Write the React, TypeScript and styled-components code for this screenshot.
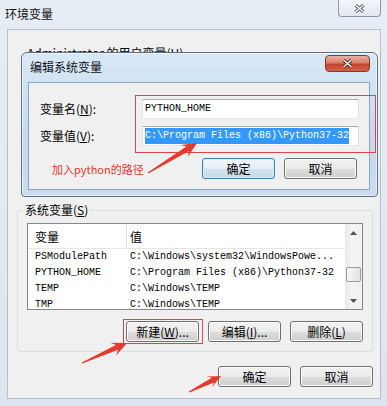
import React from 'react'
import styled, { createGlobalStyle } from 'styled-components'

const UI = `"Noto Sans CJK SC", "Liberation Sans", sans-serif`
const MONO = `"Liberation Mono", "DejaVu Sans Mono", monospace`

const GlobalStyle = createGlobalStyle`
  html, body { margin: 0; padding: 0; background: #fff; }
  body { font-family: ${UI}; font-size: 12px; color: #000; }
`

type EnvVar = { name: string; value: string }

const sysVars: EnvVar[] = [
    { name: 'PSModulePath', value: 'C:\\Windows\\system32\\WindowsPowe...' },
    { name: 'PYTHON_HOME', value: 'C:\\Program Files (x86)\\Python37-32' },
    { name: 'TEMP', value: 'C:\\Windows\\TEMP' },
    { name: 'TMP', value: 'C:\\Windows\\TEMP' },
]

// tapered red annotation arrow, tail -> tip
const arrowPoints = (x1: number, y1: number, x2: number, y2: number, hl = 15, hw = 7) => {
    const len = Math.hypot(x2 - x1, y2 - y1)
    const ux = (x2 - x1) / len, uy = (y2 - y1) / len
    const nx = -uy, ny = ux
    const p = (x: number, y: number) => `${x.toFixed(1)},${y.toFixed(1)}`
    const bx = x2 - ux * hl, by = y2 - uy * hl
    const jx = x2 - ux * (hl - 4), jy = y2 - uy * (hl - 4)
    return [
        p(x1 + nx * 0.6, y1 + ny * 0.6),
        p(jx + nx * 2.6, jy + ny * 2.6),
        p(bx + nx * hw, by + ny * hw),
        p(x2, y2),
        p(bx - nx * hw, by - ny * hw),
        p(jx - nx * 2.6, jy - ny * 2.6),
        p(x1 - nx * 0.6, y1 - ny * 0.6),
    ].join(' ')
}

const CloseGlyph = ({ light }: { light?: boolean }) => (
    <svg width="11" height="9" viewBox="0 0 11 9">
        <path d="M1.5 1 L9.5 8 M9.5 1 L1.5 8" stroke={light ? '#5a2018' : '#4e5966'} strokeWidth="3.2" />
        <path d="M1.5 1 L9.5 8 M9.5 1 L1.5 8" stroke="#fff" strokeWidth="1.4" />
    </svg>
)

const Arrow = ({ dir }: { dir: 'up' | 'down' }) => (
    <svg width="7" height="4" viewBox="0 0 7 4">
        <polygon points={dir === 'up' ? '0,4 3.5,0 7,4' : '0,0 3.5,4 7,0'} fill="#505050" />
    </svg>
)

const VarList = ({ rows, height }: { rows: EnvVar[]; height: number }) => (
    <ListBox style={{ height }}>
        <ListMain>
            <ListHeader>
                <HeadCell $first>变量</HeadCell>
                <HeadCell>值</HeadCell>
            </ListHeader>
            {rows.map(r => (
                <ListRow key={r.name}>
                    <Cell $first>{r.name}</Cell>
                    <Cell>{r.value}</Cell>
                </ListRow>
            ))}
        </ListMain>
        <ScrollBar>
            <ScrollArrow><Arrow dir="up" /></ScrollArrow>
            <ScrollTrack><Thumb /></ScrollTrack>
            <ScrollArrow><Arrow dir="down" /></ScrollArrow>
        </ScrollBar>
    </ListBox>
)

export const App = () => {
    return (
        <Window>
            <GlobalStyle />
            <TitleBar>
                <Title>环境变量</Title>
                <WinClose><CloseGlyph /></WinClose>
            </TitleBar>

            <Client>
                {/* user variables: covered by the edit dialog */}
                <UserSection>
                    <SectionLabel>Administrator 的用户变量(<u>U</u>)</SectionLabel>
                    <HiddenList />
                </UserSection>

                <Group>
                    <Legend>系统变量(<u>S</u>)</Legend>
                    <VarList rows={sysVars} height={87} />
                    <ButtonRow $top={11}>
                        <Button>新建(<u>W</u>)...</Button>
                        <Button>编辑(<u>I</u>)...</Button>
                        <Button>删除(<u>L</u>)</Button>
                    </ButtonRow>
                </Group>

                <ButtonRow $top={14}>
                    <Button>确定</Button>
                    <Button>取消</Button>
                </ButtonRow>
            </Client>

            <EditDialog>
                <DialogTitleBar>
                    <Title>编辑系统变量</Title>
                    <RedClose><CloseGlyph light /></RedClose>
                </DialogTitleBar>
                <DialogClient>
                    <FormGrid>
                        <FieldLabel>变量名(<u>N</u>):</FieldLabel>
                        <TextInput>PYTHON_HOME</TextInput>
                        <FieldLabel>变量值(<u>V</u>):</FieldLabel>
                        <TextInput><Selected>C:\Program Files (x86)\Python37-32</Selected></TextInput>
                    </FormGrid>
                    <DialogButtons>
                        <Button $default>确定</Button>
                        <Button>取消</Button>
                    </DialogButtons>
                </DialogClient>
            </EditDialog>

            <MarkBox style={{ left: 135, top: 95, width: 241, height: 58 }} />
            <MarkBox style={{ left: 123, top: 319, width: 80, height: 25 }} />
            <Note>加入python的路径</Note>
            <Marks width="387" height="406" viewBox="0 0 387 406">
                <polygon points={arrowPoints(148, 173, 197, 143)} />
                <polygon points={arrowPoints(82, 363, 127, 343)} />
                <polygon points={arrowPoints(189, 392, 221, 376, 13, 6)} />
            </Marks>
        </Window>
    )
}

const Window = styled.div`
    position: relative;
    width: 387px;
    height: 406px;
    display: flex;
    flex-direction: column;
    background: linear-gradient(#e6edf5, #dce5ef);
    overflow: hidden;
`

const TitleBar = styled.div`
    height: 29px;
    display: flex;
    justify-content: space-between;
    align-items: flex-start;
    padding: 0 6px 0 5px;
`

const Title = styled.div`
    margin-top: 6px;
    font-size: 12px;
    line-height: 16px;
    color: #111;
`

const WinClose = styled.div`
    width: 43px;
    height: 17px;
    box-sizing: border-box;
    border: 1px solid #8b98a8;
    border-top: none;
    border-radius: 0 0 4px 4px;
    background: linear-gradient(#f4f7fa, #e1e7ee);
    display: flex;
    align-items: center;
    justify-content: center;
`

const Client = styled.div`
    flex: 1;
    margin: 0 6px 7px 7px;
    border: 1px solid #b3bfcc;
    background: #f0f0f0;
    padding: 0 7px 0 9px;
    display: flex;
    flex-direction: column;
`

const UserSection = styled.div`
    padding: 0 10px;
    height: 162px;
`

const SectionLabel = styled.div`
    margin-top: 15px;
    line-height: 16px;
`

const HiddenList = styled.div`
    margin-top: 5px;
    height: 100px;
    border: 1px solid #828790;
    background: #fff;
`

const Group = styled.fieldset`
    margin: 10px 0 0;
    padding: 0 9px 9px;
    border: 1px solid #d5dfe5;
    border-radius: 3px;
    min-width: 0;
`

const Legend = styled.legend`
    margin-left: -4px;
    padding: 0 2px;
    line-height: 16px;
    font-size: 12px;
`

const ListBox = styled.div`
    margin-top: 5px;
    box-sizing: border-box;
    border: 1px solid #828790;
    background: #fff;
    display: flex;
    overflow: hidden;
`

const ListMain = styled.div`
    flex: 1;
    min-width: 0;
`

const ListHeader = styled.div`
    height: 25px;
    display: grid;
    grid-template-columns: 99px 1fr;
    border-bottom: 1px solid #e5e5e5;
    box-sizing: border-box;
`

const HeadCell = styled.div<{ $first?: boolean }>`
    display: flex;
    align-items: center;
    padding-left: ${p => (p.$first ? '7px' : '3px')};
    border-right: ${p => (p.$first ? '1px solid #e5e5e5' : 'none')};
    font-size: 12px;
`

const ListRow = styled.div`
    height: 16px;
    display: grid;
    grid-template-columns: 99px 1fr;
    font-family: ${MONO};
    font-size: 10px;
    line-height: 16px;
    white-space: nowrap;
`

const Cell = styled.div<{ $first?: boolean }>`
    padding-left: ${p => (p.$first ? '7px' : '3px')};
    overflow: hidden;
`

const ScrollBar = styled.div`
    width: 17px;
    display: flex;
    flex-direction: column;
    background: linear-gradient(to right, #e9e9e9, #f5f5f5 40%, #f1f1f1);
`

const ScrollArrow = styled.div`
    height: 17px;
    display: flex;
    align-items: center;
    justify-content: center;
`

const ScrollTrack = styled.div`
    flex: 1;
    padding: 26px 1px 0;
`

const Thumb = styled.div`
    height: 15px;
    box-sizing: border-box;
    border: 1px solid #9b9b9b;
    border-radius: 2px;
    background: linear-gradient(to right, #f6f6f6, #e2e2e2);
`

const ButtonRow = styled.div<{ $top: number }>`
    margin-top: ${p => p.$top}px;
    display: flex;
    justify-content: flex-end;
    gap: 9px;
`

const Button = styled.div<{ $default?: boolean }>`
    width: 73px;
    height: 21px;
    box-sizing: border-box;
    border: 1px solid ${p => (p.$default ? '#3c7fb1' : '#707070')};
    border-radius: 3px;
    background: ${p =>
        p.$default
            ? 'linear-gradient(#f1f7fb, #e6eff6 50%, #d3e4f0 50%, #c6dbea)'
            : 'linear-gradient(#f2f2f2, #ebebeb 50%, #dddddd 50%, #cfcfcf)'};
    box-shadow: inset 0 0 0 1px ${p => (p.$default ? '#d8ecf8' : '#fbfbfb')};
    display: flex;
    align-items: center;
    justify-content: center;
    font-size: 12px;
    white-space: nowrap;
`

const EditDialog = styled.div`
    position: absolute;
    left: 21px;
    top: 52px;
    width: 357px;
    height: 145px;
    box-sizing: border-box;
    border: 1px solid #5d6f82;
    border-radius: 6px 6px 4px 4px;
    background: linear-gradient(#d9e8f7, #c4d9ef 60%, #c9dcf0);
    box-shadow: 0 0 0 1px rgba(255, 255, 255, 0.6) inset;
    display: flex;
    flex-direction: column;
`

const DialogTitleBar = styled.div`
    height: 29px;
    display: flex;
    justify-content: space-between;
    align-items: flex-start;
    padding: 0 7px 0 8px;
`

const RedClose = styled.div`
    margin-top: 2px;
    width: 45px;
    height: 17px;
    box-sizing: border-box;
    border: 1px solid #85392c;
    border-radius: 4px;
    background: linear-gradient(#eab0a3, #d9806f 45%, #c4442e 55%, #d0634b);
    display: flex;
    align-items: center;
    justify-content: center;
`

const DialogClient = styled.div`
    flex: 1;
    margin: 0 7px 6px 6px;
    border: 1px solid #8fa4ba;
    background: #f0f0f0;
    padding: 16px 12px 0 11px;
`

const FormGrid = styled.div`
    display: grid;
    grid-template-columns: 102px 217px;
    row-gap: 7px;
    align-items: center;
`

const FieldLabel = styled.div`
    font-size: 12px;
    line-height: 16px;
`

const TextInput = styled.div`
    height: 20px;
    box-sizing: border-box;
    border: 1px solid;
    border-color: #abadb3 #dbdfe6 #e3e9ef #e2e3ea;
    background: #fff;
    padding: 1px 2px;
    font-family: ${MONO};
    font-size: 10px;
    line-height: 16px;
    white-space: nowrap;
    overflow: hidden;
`

const Selected = styled.span`
    display: inline-block;
    background: #3399ff;
    color: #fff;
`

const DialogButtons = styled.div`
    margin-top: 12px;
    display: flex;
    justify-content: flex-end;
    gap: 9px;
`

const MarkBox = styled.div`
    position: absolute;
    box-sizing: border-box;
    border: 1px solid #e0434a;
`

const Note = styled.div`
    position: absolute;
    left: 52px;
    top: 161px;
    font-size: 11px;
    line-height: 16px;
    color: #e5362e;
`

const Marks = styled.svg`
    position: absolute;
    left: 0;
    top: 0;
    pointer-events: none;
    fill: #e63a2e;
`

export default App
